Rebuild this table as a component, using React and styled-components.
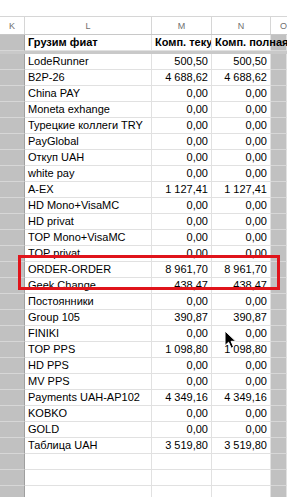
import React from "react";
import styled, { createGlobalStyle } from "styled-components";

const ROW_HEIGHT = 16;
const COLUMNS = "25px 127px 60px 59px 1fr";

const GlobalStyle = createGlobalStyle`
    html, body {
        margin: 0;
        padding: 0;
        background: #fff;
        overflow: hidden;
    }
    body {
        font-family: "Liberation Sans", Arial, sans-serif;
    }
`;

const Page = styled.div`
    position: relative;
    width: 287px;
    height: 497px;
    overflow: hidden;
    background: #fff;
`;

const TopGap = styled.div`
    height: 16px;
`;

const HeaderRow = styled.div`
    display: grid;
    grid-template-columns: ${COLUMNS};
    height: 19px;
    border-top: 1px solid #d6d6d6;
    border-bottom: 1px solid #c8c8c8;
    box-sizing: border-box;
`;

const HeaderCell = styled.div`
    display: flex;
    align-items: center;
    justify-content: ${props => (props.edge ? "flex-start" : "center")};
    padding-left: ${props => (props.edge ? "9px" : "0")};
    font-size: 9px;
    color: #6f6f6f;
    border-right: 1px solid #d6d6d6;
    background: #fff;
`;

const Row = styled.div`
    display: grid;
    grid-template-columns: ${COLUMNS};
    height: ${ROW_HEIGHT}px;
`;

const Divider = styled.div`
    height: 3px;
    background: #c9c9c9;
`;

const Cell = styled.div`
    box-sizing: border-box;
    height: ${ROW_HEIGHT}px;
    border-right: 1px solid ${props => (props.gutter ? "#9f9f9f" : "#e1e1e1")};
    border-bottom: 1px solid ${props => (props.shade ? "#d7d7d7" : "#e1e1e1")};
    background: ${props => (props.shade ? "#c1c1c1" : "#fff")};
    font-size: 11px;
    line-height: 15px;
    color: #000;
    white-space: nowrap;
    overflow: ${props => (props.spill ? "visible" : "hidden")};
    position: ${props => (props.spill ? "relative" : "static")};
    z-index: ${props => (props.spill ? 1 : "auto")};
    font-weight: ${props => (props.bold ? 700 : 400)};
    text-align: ${props => (props.num ? "right" : "left")};
    padding: ${props => (props.num ? "0 3px 0 0" : "0 0 0 3px")};
`;

const RedBox = styled.div`
    position: absolute;
    left: 18px;
    top: 255px;
    width: 262px;
    height: 35px;
    box-sizing: border-box;
    border: 3px solid #e0141b;
    pointer-events: none;
`;

const Cursor = styled.svg`
    position: absolute;
    left: 224px;
    top: 330px;
`;

const rows = [
    ["LodeRunner", "500,50"],
    ["B2P-26", "4 688,62"],
    ["China PAY", "0,00"],
    ["Moneta exhange", "0,00"],
    ["Турецкие коллеги TRY", "0,00"],
    ["PayGlobal", "0,00"],
    ["Откуп UAH", "0,00"],
    ["white pay", "0,00"],
    ["A-EX", "1 127,41"],
    ["HD Mono+VisaMC", "0,00"],
    ["HD privat", "0,00"],
    ["TOP Mono+VisaMC", "0,00"],
    ["TOP privat", "0,00"],
    ["ORDER-ORDER", "8 961,70"],
    ["Geek Change", "438,47"],
    ["Постоянники", "0,00"],
    ["Group 105", "390,87"],
    ["FINIKI", "0,00"],
    ["TOP PPS", "1 098,80"],
    ["HD PPS", "0,00"],
    ["MV PPS", "0,00"],
    ["Payments UAH-AP102", "4 349,16"],
    ["KOBKO", "0,00"],
    ["GOLD", "0,00"],
    ["Таблица UAH", "3 519,80"],
    ["", ""],
    ["", ""],
    ["", ""]
];

const App = () => (
    <Page>
        <GlobalStyle />
        <TopGap />
        <HeaderRow>
            <HeaderCell>K</HeaderCell>
            <HeaderCell>L</HeaderCell>
            <HeaderCell>M</HeaderCell>
            <HeaderCell>N</HeaderCell>
            <HeaderCell edge>O</HeaderCell>
        </HeaderRow>
        <Row>
            <Cell shade gutter />
            <Cell bold>Грузим фиат</Cell>
            <Cell bold>Комп. текущая</Cell>
            <Cell bold spill>Комп. полная</Cell>
            <Cell shade />
        </Row>
        <Divider />
        {rows.map(([name, value], i) => (
            <Row key={i}>
                <Cell shade gutter />
                <Cell>{name}</Cell>
                <Cell num>{value}</Cell>
                <Cell num>{value}</Cell>
                <Cell shade />
            </Row>
        ))}
        <RedBox />
        <Cursor width="14" height="20" viewBox="0 0 14 20">
            <path
                d="M1 1 L1 15.5 L4.6 12.2 L7.2 18.2 L9.6 17.1 L7.1 11.3 L11.8 11.3 Z"
                fill="#000"
                stroke="#fff"
                strokeWidth="1"
                strokeLinejoin="round"
            />
        </Cursor>
    </Page>
);

export default App;
